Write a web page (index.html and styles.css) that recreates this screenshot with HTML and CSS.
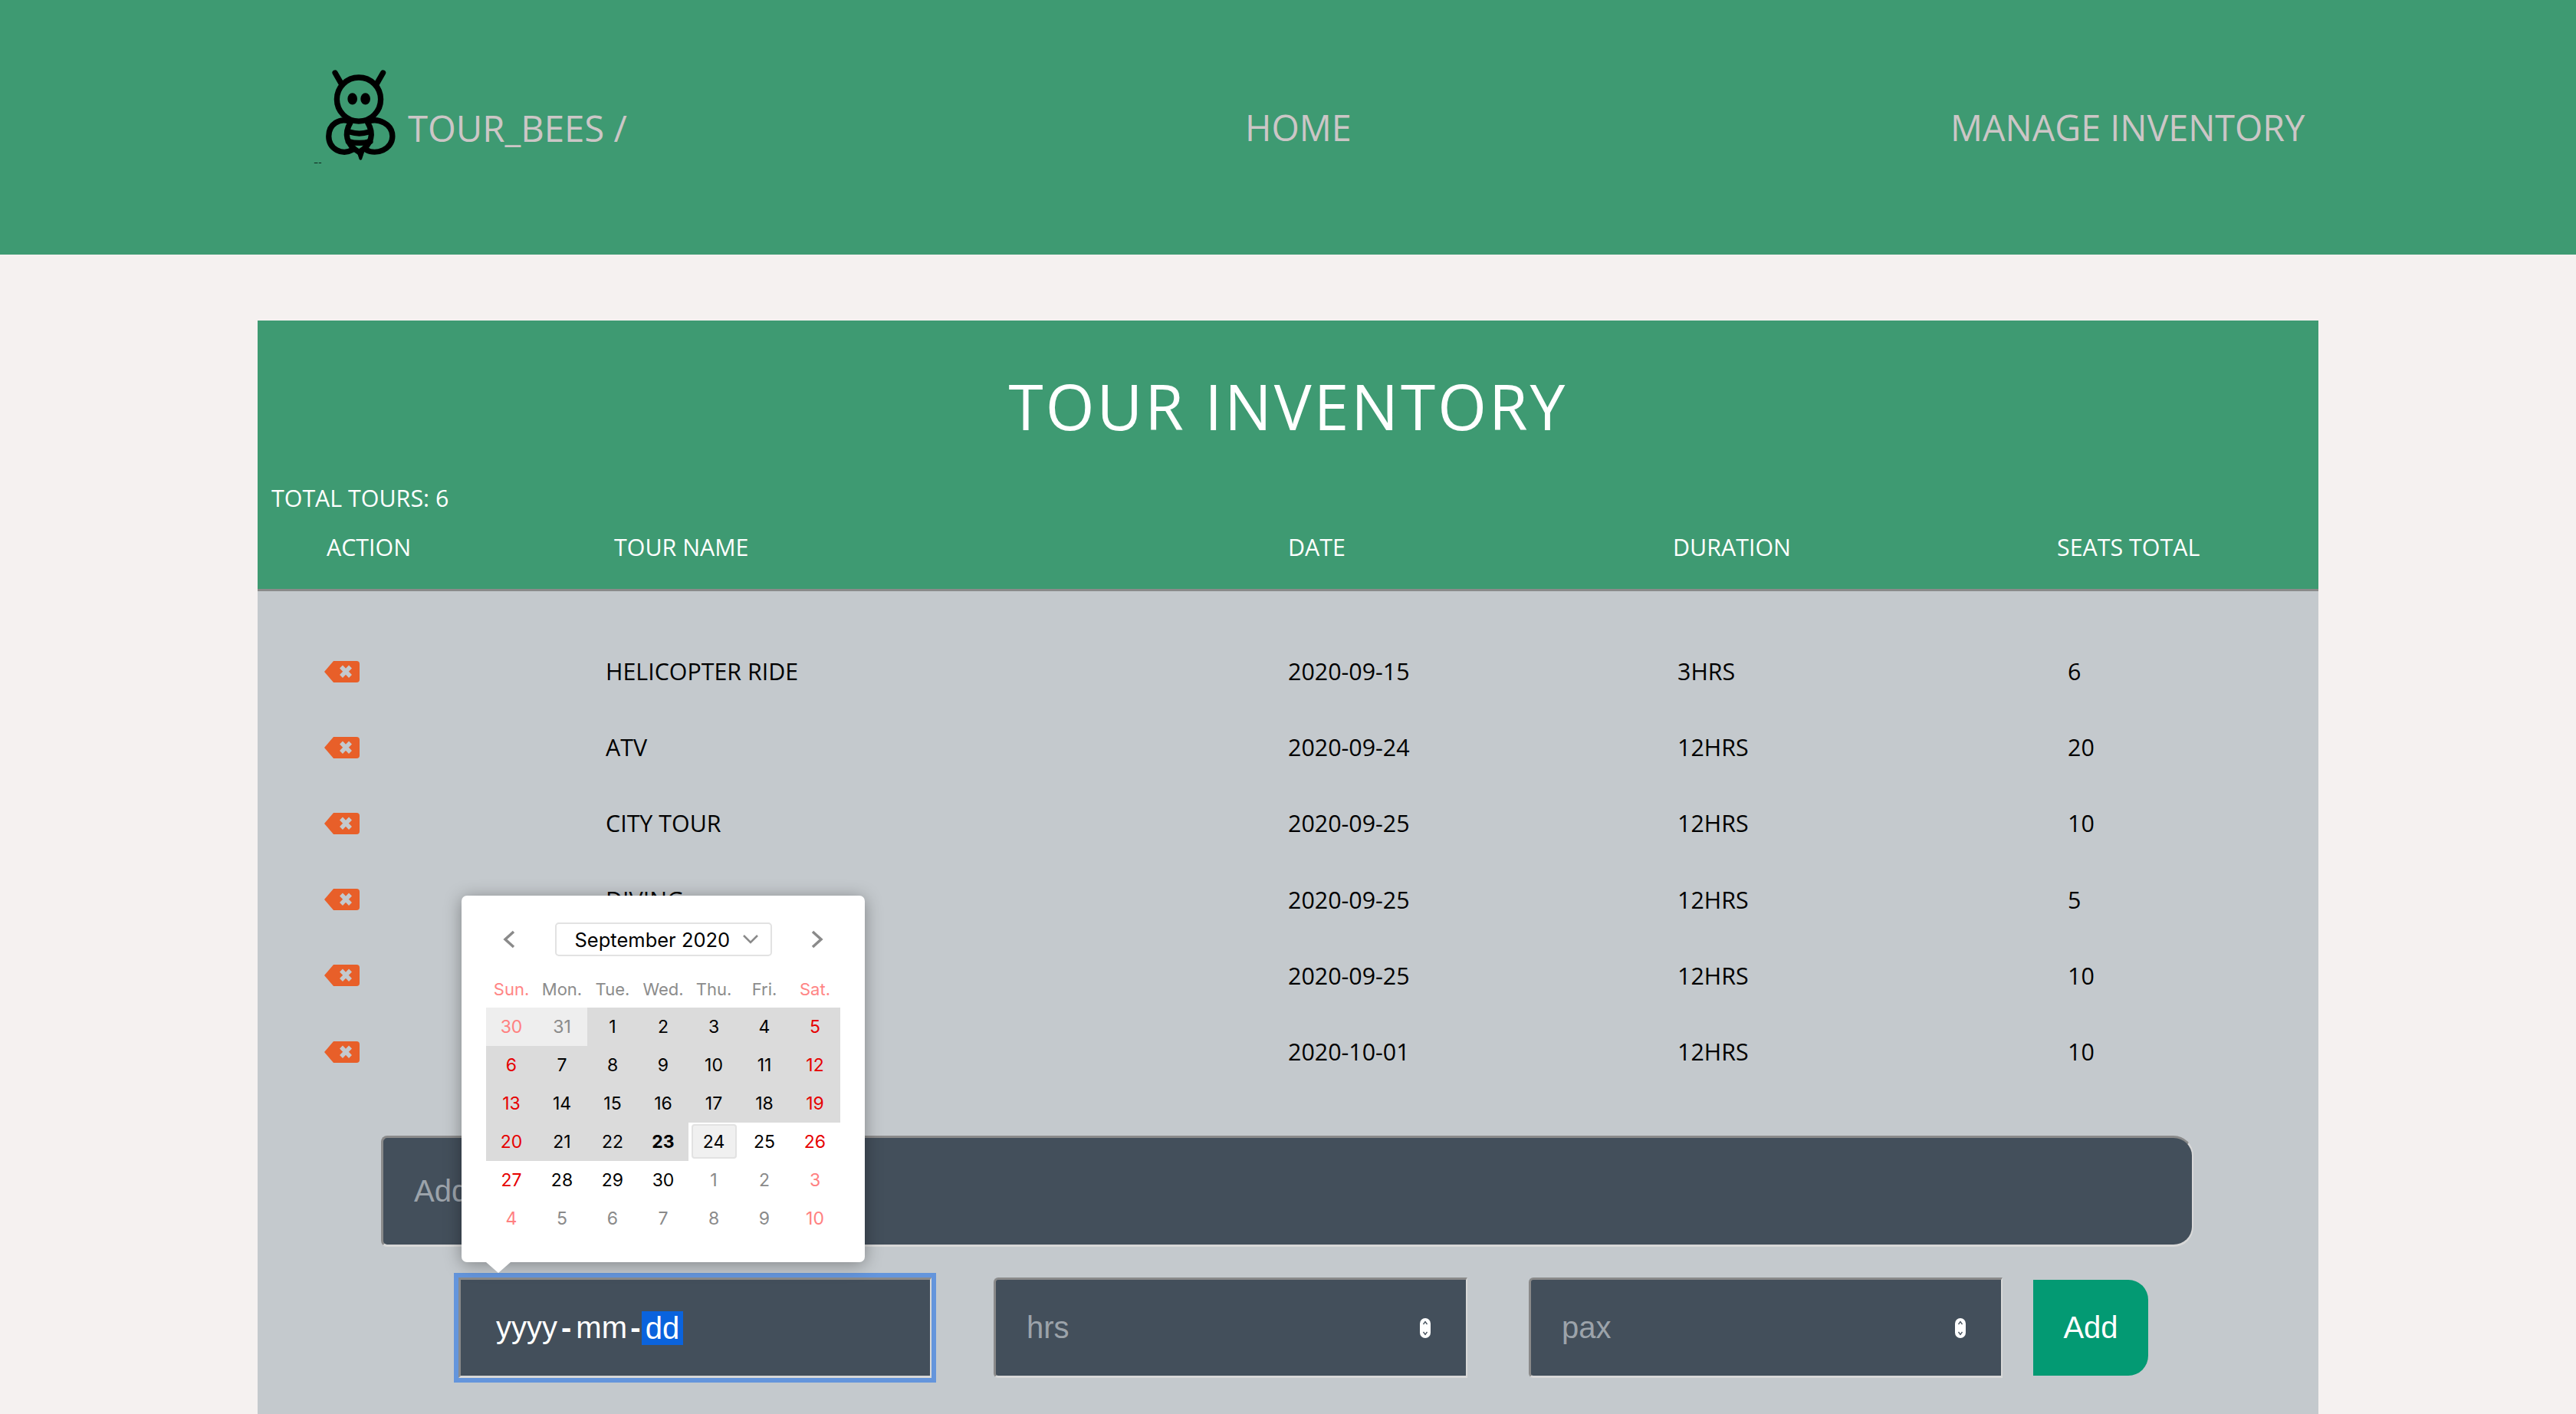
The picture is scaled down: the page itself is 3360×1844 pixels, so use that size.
FILE: index.html
```html
<!DOCTYPE html>
<html lang="en">
<head>
    <meta charset="UTF-8">
    <title>Tour Bees</title>
    <link rel="stylesheet" href="styles.css">
</head>
<body>
    <!-- Header -->
    <header class="topbar">
        <div class="brand">
            <svg class="bee" viewBox="80 85 330 385" aria-hidden="true">
                <g fill="none" stroke="#000" stroke-width="22" stroke-linecap="round">
                    <path d="M170 103 L197 150"/>
                    <path d="M358 103 L331 150"/>
                    <circle cx="263" cy="207" r="86"/>
                    <path d="M225 293 C190 280 145 302 145 352 C145 402 198 428 238 405"/>
                    <path d="M303 293 C338 280 395 302 395 352 C395 402 332 428 292 405"/>
                    <path d="M230 298 C205 340 212 385 264 414 C316 385 323 340 298 298"/>
                    <path d="M228 335 C250 342 280 342 302 335"/>
                    <path d="M222 372 C250 380 280 380 308 372"/>
                </g>
                <ellipse cx="238" cy="205" rx="19" ry="23"/>
                <ellipse cx="289" cy="205" rx="19" ry="23"/>
                <path d="M255 412 H285 L275 442 Q270 448 265 442 Z"/>
                <path d="M88 456 H102 V458 H88 Z M106 456 H116 V458 H106 Z"/>
            </svg>
            <span class="brand-name">TOUR_BEES /</span>
        </div>
        <a class="nav-link" href="#">HOME</a>
        <a class="nav-link" href="#">MANAGE INVENTORY</a>
    </header>

    <main class="panel">
        <div class="panel-head">
            <h1>TOUR INVENTORY</h1>
            <p class="total">TOTAL TOURS: 6</p>
            <div class="thead">
                <span>ACTION</span>
                <span>TOUR NAME</span>
                <span>DATE</span>
                <span>DURATION</span>
                <span>SEATS TOTAL</span>
            </div>
        </div>

        <!-- Tabla -->
        <div class="rows">
            <div class="row">
                <svg class="del" viewBox="0 0 46 28"><path class="del-tag" d="M12 0 H42 a4 4 0 0 1 4 4 V24 a4 4 0 0 1 -4 4 H12 L0 14 Z"/><path class="del-x" d="M22 7.5 L34 20 M34 7.5 L22 20"/></svg>
                <span>HELICOPTER RIDE</span><span>2020-09-15</span><span>3HRS</span><span>6</span>
            </div>
            <div class="row">
                <svg class="del" viewBox="0 0 46 28"><path class="del-tag" d="M12 0 H42 a4 4 0 0 1 4 4 V24 a4 4 0 0 1 -4 4 H12 L0 14 Z"/><path class="del-x" d="M22 7.5 L34 20 M34 7.5 L22 20"/></svg>
                <span>ATV</span><span>2020-09-24</span><span>12HRS</span><span>20</span>
            </div>
            <div class="row">
                <svg class="del" viewBox="0 0 46 28"><path class="del-tag" d="M12 0 H42 a4 4 0 0 1 4 4 V24 a4 4 0 0 1 -4 4 H12 L0 14 Z"/><path class="del-x" d="M22 7.5 L34 20 M34 7.5 L22 20"/></svg>
                <span>CITY TOUR</span><span>2020-09-25</span><span>12HRS</span><span>10</span>
            </div>
            <div class="row">
                <svg class="del" viewBox="0 0 46 28"><path class="del-tag" d="M12 0 H42 a4 4 0 0 1 4 4 V24 a4 4 0 0 1 -4 4 H12 L0 14 Z"/><path class="del-x" d="M22 7.5 L34 20 M34 7.5 L22 20"/></svg>
                <span>DIVING</span><span>2020-09-25</span><span>12HRS</span><span>5</span>
            </div>
            <div class="row">
                <svg class="del" viewBox="0 0 46 28"><path class="del-tag" d="M12 0 H42 a4 4 0 0 1 4 4 V24 a4 4 0 0 1 -4 4 H12 L0 14 Z"/><path class="del-x" d="M22 7.5 L34 20 M34 7.5 L22 20"/></svg>
                <span></span><span>2020-09-25</span><span>12HRS</span><span>10</span>
            </div>
            <div class="row">
                <svg class="del" viewBox="0 0 46 28"><path class="del-tag" d="M12 0 H42 a4 4 0 0 1 4 4 V24 a4 4 0 0 1 -4 4 H12 L0 14 Z"/><path class="del-x" d="M22 7.5 L34 20 M34 7.5 L22 20"/></svg>
                <span></span><span>2020-10-01</span><span>12HRS</span><span>10</span>
            </div>
        </div>

        <!-- Formulario -->
        <form class="add-form">
            <div class="field field-name">Add</div>
            <div class="form-line">
                <div class="field field-date">
                    <span class="seg">yyyy</span><span class="dash">-</span><span class="seg seg-mm">mm</span><span class="dash">-</span><span class="seg-on">dd</span>
                </div>
                <div class="field field-num">
                    <span>hrs</span>
                    <svg class="spin" viewBox="0 0 14 26"><rect width="14" height="26" rx="7" fill="#fff"/><path d="M4.5 8 L7 4.5 L9.5 8 M4.5 18 L7 21.5 L9.5 18" fill="none" stroke="#434f5b" stroke-width="1.3"/></svg>
                </div>
                <div class="field field-num">
                    <span>pax</span>
                    <svg class="spin" viewBox="0 0 14 26"><rect width="14" height="26" rx="7" fill="#fff"/><path d="M4.5 8 L7 4.5 L9.5 8 M4.5 18 L7 21.5 L9.5 18" fill="none" stroke="#434f5b" stroke-width="1.3"/></svg>
                </div>
                <button class="add-btn" type="button">Add</button>
            </div>
        </form>

        <!-- Calendario -->
        <div class="calendar">
            <div class="cal-head">
                <svg class="chev" viewBox="0 0 16 24"><path d="M14 2 L3 12 L14 22"/></svg>
                <div class="cal-month">
                    <span>September 2020</span>
                    <svg class="cal-caret" viewBox="0 0 20 12"><path d="M1 1 L10 10 L19 1"/></svg>
                </div>
                <svg class="chev" viewBox="0 0 16 24"><path d="M2 2 L13 12 L2 22"/></svg>
            </div>
            <div class="cal-week">
                <span class="wkend">Sun.</span><span>Mon.</span><span>Tue.</span><span>Wed.</span><span>Thu.</span><span>Fri.</span><span class="wkend">Sat.</span>
            </div>
            <div class="cal-days">
                <span class="wkend-off lite">30</span><span class="off lite">31</span><span class="sel">1</span><span class="sel">2</span><span class="sel">3</span><span class="sel">4</span><span class="sel wkend-on">5</span>
                <span class="sel wkend-on">6</span><span class="sel">7</span><span class="sel">8</span><span class="sel">9</span><span class="sel">10</span><span class="sel">11</span><span class="sel wkend-on">12</span>
                <span class="sel wkend-on">13</span><span class="sel">14</span><span class="sel">15</span><span class="sel">16</span><span class="sel">17</span><span class="sel">18</span><span class="sel wkend-on">19</span>
                <span class="sel wkend-on">20</span><span class="sel">21</span><span class="sel">22</span><span class="sel today">23</span><span class="focus"><b>24</b></span><span>25</span><span class="wkend-on">26</span>
                <span class="wkend-on">27</span><span>28</span><span>29</span><span>30</span><span class="off">1</span><span class="off">2</span><span class="wkend-off">3</span>
                <span class="wkend-off">4</span><span class="off">5</span><span class="off">6</span><span class="off">7</span><span class="off">8</span><span class="off">9</span><span class="wkend-off">10</span>
            </div>
        </div>
    </main>
</body>
</html>
```

FILE: styles.css
```css
/* General */
html, body {
    height: 100%;
}

body {
    margin: 0;
    display: flex;
    flex-direction: column;
    overflow: hidden;
    background-color: #f5f1f0;
    font-family: 'Open Sans', sans-serif;
    color: #000;
}

/* Header */
.topbar {
    flex: none;
    height: 332px;
    box-sizing: border-box;
    padding: 0 354px 0 425px;
    display: grid;
    grid-template-columns: 1199px 920px auto;
    align-items: center;
    background-color: #3e9a72;
}

.brand {
    display: flex;
    align-items: center;
}

.bee {
    width: 110px;
    height: 128px;
    margin: -26px 15px 0 -18px;
    flex: none;
}

.brand-name, .nav-link {
    font-size: 46.7px;
    color: #ccc6c6;
    text-decoration: none;
    white-space: nowrap;
}

.brand-name {
    font-size: 47.3px;
}

/* Panel */
.panel {
    position: relative;
    flex: 1;
    width: 2688px;
    margin: 86px 0 0 336px;
    background-color: #c4c9cd;
}

.panel-head {
    height: 353px;
    box-sizing: border-box;
    padding-top: 59px;
    background-color: #3e9a72;
    border-bottom: 3px solid #8a8a8a;
    color: #fff;
}

.panel-head h1 {
    margin: 0;
    height: 104px;
    line-height: 104px;
    font-size: 82px;
    font-weight: 400;
    letter-spacing: 3px;
    text-align: center;
}

.total {
    margin: 47px 0 0 18px;
    font-size: 30.4px;
    line-height: 44px;
}

.thead {
    margin-top: 20px;
    padding-left: 90px;
    display: grid;
    grid-template-columns: 375px 879px 502px 501px auto;
    font-size: 30.4px;
    line-height: 44px;
}

/* Tabla */
.rows {
    padding-top: 55px;
}

.row {
    height: 99.2px;
    padding-left: 87px;
    display: grid;
    grid-template-columns: 367px 890px 508px 509px auto;
    align-items: center;
    font-size: 30.4px;
}

.del {
    width: 46px;
    height: 28px;
}

.del-tag {
    fill: #e85f29;
}

.del-x {
    fill: none;
    stroke: #c4c9cd;
    stroke-width: 5.5;
}

/* Formulario */
.add-form {
    margin-top: 60px;
    font-family: 'Liberation Sans', Arial, sans-serif;
    font-size: 40px;
}

.field {
    box-sizing: border-box;
    background-color: #434f5b;
    border-style: solid;
    border-width: 3px 2px 3px 3px;
    border-color: #8a8a8a #d8d8d8 #d8d8d8 #8a8a8a;
    color: #9ca3aa;
    display: flex;
    align-items: center;
}

.field-name {
    width: 2364px;
    height: 145px;
    margin-left: 161px;
    padding-left: 40px;
    border-radius: 8px 26px 26px 8px;
}

.form-line {
    margin: 40px 0 0 262px;
    display: flex;
    align-items: center;
}

.field-date {
    width: 617px;
    height: 131px;
    padding-left: 46px;
    margin-right: 81px;
    color: #fff;
    box-shadow: 0 0 0 6px #6495dc;
}

.seg {
    width: 80px;
}

.seg-mm {
    width: 66px;
    margin-left: 6px;
}

.dash {
    margin-left: 5px;
    font-weight: 700;
}

.seg-on {
    margin-left: 1px;
    padding: 0 5px;
    line-height: 44px;
    background-color: #0a63dd;
}

.field-num {
    width: 618px;
    height: 131px;
    padding: 0 46px 0 40px;
    margin-right: 80px;
    justify-content: space-between;
    border-radius: 6px 0 0 6px;
}

.field-num + .field-num {
    margin-right: 40px;
}

.spin {
    width: 14px;
    height: 26px;
}

.add-btn {
    width: 150px;
    height: 125px;
    padding: 0;
    border: none;
    border-radius: 0 26px 26px 0;
    background-color: #039a73;
    color: #fff;
    font: inherit;
}

/* Calendario */
.calendar {
    position: absolute;
    left: 266px;
    top: 750px;
    width: 526px;
    height: 478px;
    box-sizing: border-box;
    padding: 35px 32px 0;
    background: #fff;
    border-radius: 7px;
    box-shadow: 0 3px 22px rgba(0, 0, 0, 0.35);
    font-family: Inter, 'Liberation Sans', sans-serif;
}

.calendar::after {
    content: "";
    position: absolute;
    left: 32px;
    bottom: -14px;
    border-left: 16px solid transparent;
    border-right: 16px solid transparent;
    border-top: 14px solid #fff;
}

.cal-head {
    height: 44px;
    padding: 0 22px;
    display: flex;
    align-items: center;
    justify-content: space-between;
}

.chev {
    width: 16px;
    height: 24px;
    fill: none;
    stroke: #8a8a8a;
    stroke-width: 3.5;
}

.cal-month {
    width: 283px;
    height: 44px;
    box-sizing: border-box;
    padding: 0 16px 0 24px;
    display: flex;
    align-items: center;
    justify-content: space-between;
    border: 2px solid #e2e2e2;
    border-radius: 5px;
    font-size: 25.5px;
    white-space: nowrap;
}

.cal-caret {
    width: 20px;
    height: 12px;
    fill: none;
    stroke: #8a8a8a;
    stroke-width: 2.5;
}

.cal-week, .cal-days {
    display: grid;
    grid-template-columns: repeat(7, 66px);
    text-align: center;
}

.cal-week {
    margin-top: 19px;
    height: 48px;
    line-height: 48px;
    font-size: 22px;
    color: #8c8c8c;
}

.cal-week .wkend {
    color: #ff8585;
}

.cal-days {
    grid-auto-rows: 50px;
    line-height: 50px;
    font-size: 23px;
}

.sel {
    background-color: #dbdbdb;
}

.lite {
    background-color: #eeeeee;
}

.today {
    font-weight: 700;
}

.focus b {
    display: block;
    height: 45px;
    width: 59px;
    margin: 2px auto 0;
    box-sizing: border-box;
    line-height: 42px;
    font-weight: 400;
    background-color: #f0f0f0;
    border: 2px solid #e2e2e2;
    border-radius: 4px;
}

.off {
    color: #8a8a8a;
}

.wkend-on {
    color: #e60000;
}

.wkend-off {
    color: #ff8080;
}
```
